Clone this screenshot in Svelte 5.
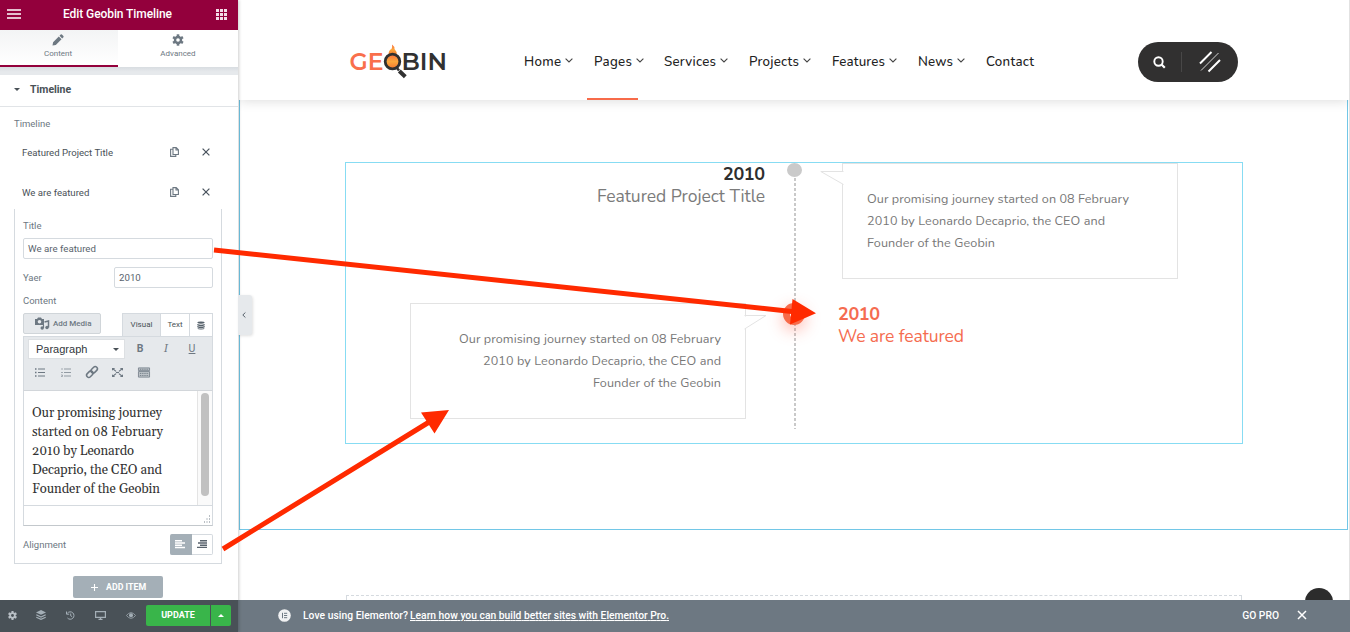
<script>
  const nav = [
    { label: 'Home', left: 524, w: 37 },
    { label: 'Pages', left: 594, w: 38, active: true },
    { label: 'Services', left: 664, w: 52 },
    { label: 'Projects', left: 749, w: 50 },
    { label: 'Features', left: 832, w: 53 },
    { label: 'News', left: 918, w: 35 },
    { label: 'Contact', left: 986, w: 48, plain: true }
  ];
  const items = ['Featured Project Title', 'We are featured'];
  const lines = [
    { text: 'Our promising journey started on 08 February', w: 262 },
    { text: '2010 by Leonardo Decaprio, the CEO and', w: 238 },
    { text: 'Founder of the Geobin', w: 128 }
  ];
  const editorLines = [
    { text: 'Our promising journey', w: 130 },
    { text: 'started on 08 February', w: 131 },
    { text: '2010 by Leonardo', w: 102 },
    { text: 'Decaprio, the CEO and', w: 130 },
    { text: 'Founder of the Geobin', w: 128 }
  ];
</script>

{#snippet fitted(text, w, h, base, cls)}
  <svg class={cls} width={w} height={h}>
    <text x="0" y={base} textLength={w}>{text}</text>
  </svg>
{/snippet}

<div class="screen">
  <aside>
    <header class="top">
      <svg width="14" height="10"><path d="M0 1h14M0 5h14M0 9h14" stroke="#fff" stroke-width="1.7" /></svg>
      {@render fitted('Edit Geobin Timeline', 109, 16, 12, 'heading')}
      <svg width="11" height="11"><path d="M0 1.5h11M0 5.5h11M0 9.5h11" stroke="#f3dce7" stroke-width="2.8" stroke-dasharray="3 1" /></svg>
    </header>
    <div class="tabs">
      <div class="tab on">
        <svg width="12" height="12" viewBox="0 0 12 12"><path d="M.5 11.5l.6-3.3 5.7-5.7 2.7 2.7-5.7 5.7zM7.5 1.8L8.7.6q.6-.5 1.2 0l1.5 1.5q.5.6 0 1.2l-1.2 1.2z" fill="#6d7882" /></svg>
        <span>Content</span>
      </div>
      <div class="tab">
        <svg width="12" height="12" viewBox="-6 -6 12 12"><g fill="#6d7882"><circle r="4.2" /><path d="M-1.3-5.7h2.6V5.7h-2.6z" /><path d="M-1.3-5.7h2.6V5.7h-2.6z" transform="rotate(60)" /><path d="M-1.3-5.7h2.6V5.7h-2.6z" transform="rotate(120)" /></g><circle r="1.8" fill="#fff" /></svg>
        <span>Advanced</span>
      </div>
    </div>
    <div class="strip"></div>
    <div class="sec"><i class="tri"></i><b>Timeline</b></div>
    <div class="label first">Timeline</div>
    {#each items as item}
      <div class="item">
        <span>{item}</span>
        <svg width="9" height="10" viewBox="0 0 9 10"><path d="M3 .6h3.2L8.4 2.8v4.7H3zM6 .6V3h2.4M3 2.2H.6v7.2h5.2V7.6" fill="none" stroke="#6d7882" stroke-width="1.1" /></svg>
        <svg width="8" height="8" viewBox="0 0 8 8"><path d="M.6.6l6.8 6.8M7.4.6L.6 7.4" stroke="#4a545e" stroke-width="1.25" /></svg>
      </div>
    {/each}
    <div class="fields">
      <div class="label title">Title</div>
      <div class="input">We are featured</div>
      <div class="year"><span>Yaer</span><div class="input">2010</div></div>
      <div class="label content">Content</div>
      <div class="modes">
        <div class="media">
          <svg width="14" height="13" viewBox="0 0 14 13"><path d="M0 2h2l1-1.5h3L7 2h2v6H0z" fill="#6d7882" /><circle cx="4.5" cy="4.8" r="1.8" fill="#e6e9ec" /><path d="M9.5 5l4-1v6.5" fill="none" stroke="#6d7882" stroke-width="1.5" /><circle cx="12" cy="10.5" r="1.7" fill="#6d7882" /><circle cx="7.2" cy="11" r="1.7" fill="#6d7882" /><path d="M8.5 11V8" stroke="#6d7882" stroke-width="1.2" /></svg>
          <span>Add Media</span>
        </div>
        <div class="switch">
          <span class="visual">Visual</span><span class="text">Text</span>
          <span class="db"><svg width="8" height="9" viewBox="0 0 8 9"><path d="M.3 1.7Q.4.4 4 .4t3.7 1.3q-1.2 1-3.7 1T.3 1.7M.3 3q3.7 1.6 7.4 0v1.3q-3.7 1.7-7.4 0zM.3 5q3.7 1.6 7.4 0v1.3q-3.7 1.7-7.4 0zM.3 7q3.7 1.6 7.4 0-.4 1.6-3.7 1.6T.3 7" fill="#56616b" /></svg></span>
        </div>
      </div>
      <div class="toolbar">
        <div class="trow">
          <div class="select"><span>Paragraph</span><i class="tri"></i></div>
          <b class="tool">B</b><i class="tool ital">I</i><u class="tool">U</u>
        </div>
        <div class="trow second">
          <svg width="10" height="9"><path d="M3 1h7M3 4.500h7M3 8h7" stroke="#6d7882" /><path d="M0 1h1.500M0 4.500h1.500M0 8h1.500" stroke="#6d7882" stroke-width="1.500" /></svg>
          <svg width="10" height="9"><path d="M3 1h7M3 4.500h7M3 8h7" stroke="#929ba3" /><path d="M1 0v2M0 4.500h2M0 7h1.500v1.500H0" fill="none" stroke="#929ba3" stroke-width=".8" /></svg>
          <svg width="12" height="12" viewBox="0 0 12 12"><g fill="none" stroke="#6d7882" stroke-width="1.500" transform="rotate(-45 6 6)"><rect x="-.7" y="3.800" width="7.200" height="4.400" rx="2.200" /><rect x="5.500" y="3.800" width="7.200" height="4.400" rx="2.200" /></g></svg>
          <svg width="11" height="9" viewBox="0 0 11 10" preserveAspectRatio="none"><path d="M1 1l3 2.700M10 1L7 3.700M1 9l3-2.700M10 9L7 6.300" stroke="#6d7882" stroke-width="1.300" /><path d="M0 0h3.200L0 3zM11 0H7.800L11 3zM0 10h3.200L0 7zM11 10H7.800L11 7z" fill="#6d7882" /><path d="M4 5h3" stroke="#6d7882" stroke-width="1.300" /></svg>
          <svg width="12" height="11" viewBox="0 0 13 11"><path d="M.5.5h12v3H.5zM.5 4.500h12v6H.5z" fill="#c0c6cb" stroke="#7d8790" /><path d="M2 2h9M2 6.500h9M2 8.700h9" stroke="#6d7882" stroke-dasharray="1.200 .8" /></svg>
        </div>
      </div>
      <div class="editor">
        <div class="doc">
          {#each editorLines as l}{@render fitted(l.text, l.w, 19, 14, 'serif')}{/each}
        </div>
        <div class="track"><div class="thumb"></div></div>
      </div>
      <div class="status"><svg width="9" height="9"><path d="M7 1h1M4.500 4h1M7 4h1M2 7h1M4.500 7h1M7 7h1" stroke="#a3aab1" stroke-width="1.500" /></svg></div>
      <div class="align">
        <span>Alignment</span>
        <div class="abtn on"><svg width="10" height="8"><path d="M0 .8h7M0 3h10M0 5.200h7M0 7.400h10" stroke="#fff" stroke-width="1.500" /></svg></div>
        <div class="abtn"><svg width="10" height="8"><path d="M3 .8h7M1 3h9M3 5.200h7M0 7.400h10" stroke="#59636d" stroke-width="1.400" /></svg></div>
      </div>
    </div>
    <div class="add"><svg width="7" height="7"><path d="M3.500 0v7M0 3.500h7" stroke="#fff" stroke-width="1.100" /></svg><span>ADD ITEM</span></div>
    <footer>
      <svg width="9" height="9" viewBox="-6 -6 12 12"><g fill="#b9c0c6"><circle r="4.200" /><path d="M-1.400-6h2.800V6h-2.800z" /><path d="M-1.400-6h2.800V6h-2.800z" transform="rotate(60)" /><path d="M-1.400-6h2.800V6h-2.800z" transform="rotate(120)" /></g><circle r="1.900" fill="#495157" /></svg>
      <svg width="10" height="10" viewBox="0 0 10 10"><path d="M5 0l5 2.400-5 2.300L0 2.400z" fill="#a4afb7" /><path d="M.3 4.800L5 7l4.700-2.200M.3 7.200L5 9.400l4.700-2.200" fill="none" stroke="#a4afb7" stroke-width="1.200" /></svg>
      <svg width="9" height="9" viewBox="0 0 9 9"><path d="M1.400 2.200A3.700 3.700 0 1 1 1.500 7M.5.5v2.700h2.700M4.700 2.500v2.300l1.400.8" fill="none" stroke="#a4afb7" /></svg>
      <svg width="11" height="9" viewBox="0 0 11 9"><path d="M.6.6h9.800v5.800H.6zM5.500 6v2.400M3.500 8.400h4" fill="none" stroke="#a4afb7" stroke-width="1.200" /></svg>
      <svg width="10" height="7" viewBox="0 0 10 7"><path d="M.4 3.500Q5-2.200 9.600 3.500 5 9.200.4 3.500z" fill="none" stroke="#8e989f" /><circle cx="5" cy="3.300" r="2" fill="#a4afb7" /></svg>
      <div class="update">UPDATE</div>
      <div class="more"><i></i></div>
    </footer>
  </aside>

  <main>
    <header class="site">
      <svg class="logo" width="100" height="38" viewBox="349 43 100 38">
        <defs><linearGradient id="flame" x1="0" y1="1" x2="0" y2="0"><stop offset="0" stop-color="#f4772f" /><stop offset=".5" stop-color="#fba83c" /><stop offset="1" stop-color="#f96d3d" /></linearGradient></defs>
        <text class="ge" x="349.500" y="70" textLength="34" lengthAdjust="spacingAndGlyphs">GE</text>
        <text class="bin" x="401.500" y="70" textLength="45.500" lengthAdjust="spacingAndGlyphs">BIN</text>
        <path d="M388.500 55q0-5 3-6 1-2 .5-4.500 2.800 2 2.500 4.500 2.300 2 2.300 6z" fill="url(#flame)" />
        <circle cx="392.500" cy="61.500" r="7.300" fill="url(#flame)" stroke="#313131" stroke-width="2.800" />
        <path d="M397 68l2 2.500" stroke="#313131" stroke-width="2.500" /><path d="M399.300 71l6 5.800" stroke="#313131" stroke-width="4" />
      </svg>
      <nav>
        {#each nav as n, i}
          <div class="nitem" class:active={n.active} style:width="{(nav[i + 1]?.left ?? 1138) - n.left}px">
            {@render fitted(n.label, n.w, 20, 15, 'navtext')}
            {#if !n.plain}<svg class="chev" width="8" height="5"><path d="M.6.6L4 4 7.400.6" fill="none" stroke="#444" stroke-width="1.100" /></svg>{/if}
          </div>
        {/each}
      </nav>
      <div class="pill">
        <svg width="13" height="13"><circle cx="5.500" cy="5.500" r="4.200" fill="none" stroke="#fff" stroke-width="1.900" /><path d="M8.500 8.500l3.300 3.300" stroke="#fff" stroke-width="2.200" /></svg>
        <i></i>
        <svg width="22" height="22"><path d="M1 12.500L12.500 1M9.500 20.500L21 9" stroke="#fff" stroke-width="2" /><path d="M2 19.500L19.500 2" stroke="#d5d5d5" stroke-width="1" /></svg>
      </div>
    </header>
    <section>
      <div class="timeline">
        <div class="spine"></div>
        <div class="event one">
          <div class="name">
            {@render fitted('2010', 42, 22, 17, 'yr')}
            {@render fitted('Featured Project Title', 168, 22, 17, 'ttl')}
          </div>
          <div class="mid"><div class="dot"></div></div>
          <div class="card">
            <svg class="beak lb" width="23" height="22"><path d="M22.500 9V21" stroke="#fff" stroke-width="2"/><path d="M23.500 8.500H.8L23.500 21.500" fill="none" stroke="#e3e3e3" /></svg>
            {#each lines as l}{@render fitted(l.text, l.w, 22, 15, 'copy')}{/each}
          </div>
        </div>
        <div class="event two">
          <div class="card right">
            <svg class="beak rb" width="23" height="23"><path d="M1.500 9.500V21" stroke="#fff" stroke-width="2"/><path d="M.5 8.500h21.500L.5 22" fill="none" stroke="#e3e3e3" /></svg>
            {#each lines as l}{@render fitted(l.text, l.w, 22, 15, 'copy')}{/each}
          </div>
          <div class="mid wide"><div class="dot hot"></div></div>
          <div class="name hotname">
            {@render fitted('2010', 42, 22, 17, 'yr')}
            {@render fitted('We are featured', 126, 22, 17, 'ttl')}
          </div>
        </div>
      </div>
    </section>
    <div class="dropzone"></div>
    <div class="totop"></div>
    <div class="notice">
      <svg width="13" height="13" viewBox="0 0 13 13"><circle cx="6.500" cy="6.500" r="6.300" fill="#f1f2f3" /><path d="M4.500 3.800v5.400M6 4.300h3.200M6 6.500h3.200M6 8.700h3.200" stroke="#6d7882" /></svg>
      {@render fitted('Love using Elementor?', 105, 16, 12, 'ntext')}
      {@render fitted('Learn how you can build better sites with Elementor Pro.', 259, 16, 12, 'ntext link')}
      <span class="pro">GO PRO</span>
      <svg width="10" height="10"><path d="M1 1l8 8M9 1L1 9" stroke="#fff" stroke-width="1.500" /></svg>
    </div>
  </main>

  <div class="handle"><svg width="4" height="6"><path d="M3.400.5L.8 3l2.600 2.500" fill="none" stroke="#59636d" /></svg></div>
  <svg class="arrows" width="1350" height="632">
    <path d="M214 250L794 311.700M223 549L430 421.500" stroke="#ff2a00" stroke-width="5" />
    <path d="M792.500 299L816 313.200 790 324.500zM421 412.500L449 410 434.500 433.500z" fill="#ff2a00" />
  </svg>
</div>

<style>
  .screen { position: relative; display: flex; width: 1350px; height: 632px; overflow: hidden; background: #fff; font-family: Roboto, "Liberation Sans", sans-serif; font-size: 10px; color: #556068; }
  .screen * { box-sizing: border-box; }
  svg { display: block; flex: none; overflow: visible; }
  svg text { fill: currentColor; }
  aside { display: flex; flex-direction: column; width: 238px; flex: none; background: #fff; box-shadow: 1px 0 3px rgba(0,0,0,.2); z-index: 2; }
  .top { height: 30px; flex: none; background: #93003c; display: flex; align-items: center; padding: 0 11px 2px 7px; }
  .heading { font-size: 12px; font-weight: 500; color: #fff; margin: 0 auto 0 42px; }
  .tabs { display: flex; height: 37px; flex: none; }
  .tab { width: 120px; display: flex; flex-direction: column; align-items: center; padding-top: 4px; font-size: 8px; color: #6d7882; line-height: 10px; gap: 3px; }
  .tab.on { width: 118px; background: linear-gradient(#f3f4f5, #fff); border-bottom: 2px solid #93003c; padding-right: 2px; }
  .strip { height: 8px; flex: none; background: linear-gradient(#d8dde1, #e6e9ec 60%); }
  .sec { height: 32px; flex: none; display: flex; align-items: center; border-bottom: 1px solid #e1e4e7; padding: 0 0 2px 14px; gap: 10px; font-size: 10.500px; color: #495157; }
  .tri { width: 0; border: 3px solid transparent; border-top: 3.500px solid #495157; border-bottom: 0; }
  .label { line-height: 12px; font-size: 9.500px; color: #6d7882; flex: none; }
  .first { margin: 11px 0 7px 14px; }
  .item { height: 40px; flex: none; display: flex; align-items: center; padding: 0 28px 10px 22px; font-size: 9.600px; color: #495157; }
  .item span { flex: 1; }
  .item svg + svg { margin-left: 23px; }
  .fields { margin: -8px 16px 0 14px; width: 208px; height: 355px; flex: none; border: 1px solid #d5dadf; border-top: 0; padding: 11px 8px 0; display: flex; flex-direction: column; }
  .label.title { margin-bottom: 6px; }
  .input { height: 21px; flex: none; border: 1px solid #d5dadf; border-radius: 2px; font-size: 9.700px; line-height: 19px; padding-left: 4px; color: #59636d; }
  .year { display: flex; justify-content: space-between; align-items: center; margin-top: 8px; font-size: 9.500px; color: #6d7882; }
  .year .input { width: 99px; }
  .label.content { margin: 7px 0 6px; }
  .modes { display: flex; justify-content: space-between; height: 23px; flex: none; }
  .media { width: 78px; height: 21px; border: 1px solid #d0d5d9; border-radius: 2px; background: #e6e9ec; display: flex; align-items: center; gap: 4px; padding: 0 0 1px 11px; font-size: 8px; font-weight: 500; color: #6d7882; white-space: nowrap; }
  .switch { display: flex; width: 91px; border: 1px solid #d5dadf; border-bottom: 0; font-size: 8px; line-height: 22px; text-align: center; color: #495157; }
  .visual { width: 37px; background: #e6e9ec; }
  .text { width: 30px; border: 1px solid #d5dadf; border-width: 0 1px; }
  .db { flex: 1; display: flex; align-items: center; justify-content: center; }
  .toolbar { height: 55px; flex: none; background: #e6e9ec; border: 1px solid #d5dadf; border-bottom-color: #d2d6da; padding: 2px 4px; }
  .trow { display: flex; align-items: center; height: 20px; }
  .select { width: 97px; height: 20px; border: 1px solid #dde0e3; background: #fff; display: flex; justify-content: space-between; align-items: center; padding: 0 5px 0 7px; font-size: 11px; color: #32373c; font-family: "Liberation Sans", sans-serif; }
  .tool { width: 26px; text-align: center; font-size: 10.500px; color: #6d7882; margin-top: -2px; }
  .select + .tool { margin-left: 2px; }
  .ital { font-family: "DejaVu Serif", serif; font-weight: 400; font-size: 10.500px; }
  .second { padding-left: 7px; margin-top: 3px; gap: 15px; height: 20px; }
  .second svg:first-child { margin-right: 1px; }
  .second svg:nth-child(4) { margin-left: -1px; }
  .editor { height: 115px; flex: none; display: flex; border: 1px solid #d5dadf; border-top: 0; background: #fff; }
  .doc { flex: 1; padding: 12px 0 0 8px; }
  .serif { font-family: Georgia, Gelasio, "Liberation Serif", serif; font-size: 13px; color: #333; }
  .track { width: 15px; border-left: 1px solid #e4e4e4; background: #fafafa; padding: 2px 3px; }
  .thumb { width: 8px; height: 103px; border-radius: 4px; background: #c1c1c1; }
  .status { height: 20px; flex: none; border: 1px solid #d5dadf; border-bottom-color: #c3c8cc; border-top: 0; display: flex; justify-content: flex-end; align-items: flex-end; padding: 1px; }
  .align { display: flex; align-items: center; height: 22px; flex: none; margin-top: 7px; font-size: 9.500px; color: #6d7882; }
  .align span { flex: 1; }
  .abtn { width: 21.500px; height: 21px; border: 1px solid #d5dadf; border-radius: 0 2px 2px 0; display: flex; align-items: center; justify-content: center; border-left: 0; }
  .abtn.on { background: #a4afb7; border-color: #a4afb7; border-radius: 2px 0 0 2px; }
  .add { width: 90px; height: 22px; flex: none; margin: 12px 0 0 73px; border-radius: 2px; background: #a4afb7; display: flex; align-items: center; padding-left: 18px; gap: 8px; color: #fff; font-size: 8.800px; font-weight: 700; }
  footer { height: 32px; margin-top: auto; flex: none; background: #495157; display: flex; align-items: center; padding: 0 7px 2px 8px; gap: 20px; }
  footer svg:first-child { margin-right: -1px; }
  .update { width: 64px; height: 21px; background: #39b54a; border-radius: 2px 0 0 2px; color: #fff; font-size: 9px; font-weight: 700; line-height: 21px; text-align: center; margin-left: -10px; }
  .more { width: 20px; height: 21px; background: #39b54a; border-radius: 0 2px 2px 0; margin-left: -19px; display: flex; align-items: center; justify-content: center; }
  .more i { border: 2.500px solid transparent; border-width: 0 3px 3px; border-bottom-color: #fff; }

  main { position: relative; flex: 1; display: flex; flex-direction: column; padding-left: 1px; border-right: 1px solid #e2e2e2; font-family: Nunito, "Noto Sans", sans-serif; }
  .site { height: 100px; flex: none; background: #fff; box-shadow: 0 0 12px rgba(0,0,0,.16); display: flex; padding: 0 0 0 110px; position: relative; z-index: 1; clip-path: inset(0 0 -20px 0); }
  .logo { margin: 43px 75px 0 0; font: 600 23.500px Montserrat, Inter, sans-serif; }
  .logo .ge { fill: #f96f4c; }
  .logo .bin { fill: #313131; }
  nav { display: flex; }
  .nitem { flex: none; display: flex; padding-top: 51px; position: relative; }
  .active::after { content: ""; position: absolute; left: -7px; bottom: 0; width: 51px; height: 2px; background: #f76b4a; }
  .navtext { font-size: 13.300px; font-weight: 500; color: #222; }
  .chev { margin: 7px 0 0 4px; }
  .pill { width: 100px; height: 40px; margin-top: 42px; border-radius: 20px; background: #313030; display: flex; align-items: center; padding-left: 15px; }
  .pill i { width: 1px; height: 20px; background: #484747; margin: 0 17px 0 15px; }
  section { height: 430px; flex: none; margin-right: 1px; border: 1px solid #72c7e7; border-top: 0; padding: 62px 0 0 105px; }
  .timeline { position: relative; width: 898px; height: 282px; border: 1px solid #87dcf3; padding-left: 64px; }
  .spine { position: absolute; left: 448px; top: 15px; width: 2px; height: 251px; background: repeating-linear-gradient(#c9c9c9 0 3px, transparent 3px 5px); }
  .event { display: flex; height: 116px; position: relative; }
  .two { margin-top: 24px; }
  .name { width: 355px; display: flex; flex-direction: column; align-items: flex-end; color: #7b7b7b; }
  .yr { font-size: 18px; font-weight: 700; color: #2e2e2e; }
  .ttl { font-size: 17.500px; font-weight: 400; }
  .hotname { align-items: flex-start; color: #f56c50; }
  .hotname .yr { color: #f56c50; }
  .mid { width: 77px; padding-left: 22px; }
  .mid.wide { width: 92px; padding-left: 37px; }
  .dot { width: 15px; height: 14px; border-radius: 50%; background: #cacaca; }
  .dot.hot { width: 22px; height: 22px; background: #fff; border: 7px solid #f76b4a; box-shadow: 0 5px 16px rgba(255,75,50,.4); }
  .card { position: relative; width: 336px; height: 116px; border: 1px solid #e3e3e3; padding: 24px 24px 24px 23.500px; display: flex; flex-direction: column; }
  .right { align-items: flex-end; padding-right: 24.500px; }
  .copy { font-size: 12.600px; color: #777; }
  .beak { position: absolute; top: -1px; }
  .lb { left: -23px; }
  .rb { left: 333px; top: 3px; }
  .dropzone { width: 896px; height: 6px; flex: none; margin: 65px 0 0 107px; border: 1px dashed #d5dadf; border-bottom: 0; }
  .totop { position: absolute; left: 1067px; top: 588px; width: 28px; height: 28px; border-radius: 50%; background: #2c2c2c; }
  .notice { position: relative; height: 32px; flex: none; margin: -1px -1px 0 -1px; background: #6d7882; display: flex; align-items: center; padding: 0 43px 2px 40px; color: #fff; font-family: Roboto, sans-serif; }
  .ntext { font-size: 10.300px; font-weight: 500; margin-left: 12px; }
  .link { margin-left: 2px; }
  .link text { text-decoration: underline; }
  .pro { margin-left: auto; margin-right: 18px; font-size: 10.300px; font-weight: 500; }
  .handle { position: absolute; z-index: 3; left: 238px; top: 295px; width: 14px; height: 40px; background: #e6e9ec; border-radius: 0 3px 3px 0; box-shadow: 1px 1px 3px rgba(0,0,0,.12); display: flex; align-items: center; padding-left: 4px; }
  .arrows { position: absolute; left: 0; top: 0; z-index: 4; pointer-events: none; }
</style>
